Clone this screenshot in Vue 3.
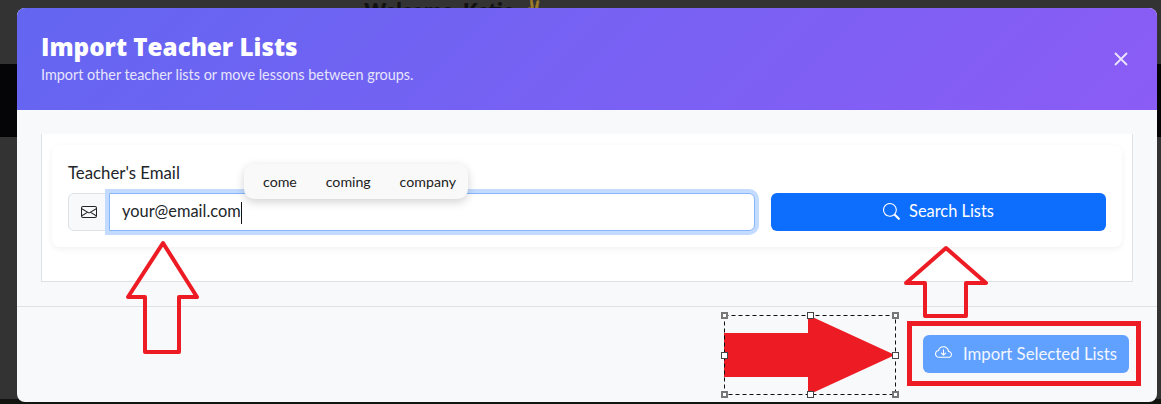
<script setup>
const suggestions = ['come', 'coming', 'company']
const handles = [
  { left: '724px', top: '315px', corner: true }, { left: '810px', top: '315px' }, { left: '895px', top: '315px', corner: true },
  { left: '724px', top: '355px' }, { left: '895px', top: '355px' },
  { left: '724px', top: '394px', corner: true }, { left: '810px', top: '394px' }, { left: '895px', top: '394px', corner: true }
]
</script>

<template>
  <div class="page">
    <div class="backdrop-top">
      <span class="welcome">Welcome, Katie <em>✌</em></span>
    </div>
    <div class="backdrop-band"></div>
    <div class="backdrop-rest"></div>

    <section class="modal">
      <header class="head">
        <div>
          <h1>Import Teacher Lists</h1>
          <p>Import other teacher lists or move lessons between groups.</p>
        </div>
        <svg class="close" viewBox="0 0 16 16" width="16" height="16" aria-label="Close">
          <path d="M2 2 14 14M14 2 2 14" stroke="#ece6fd" stroke-width="1.8" fill="none" />
        </svg>
      </header>

      <div class="body">
        <div class="panel">
          <div class="card">
            <label>Teacher's Email</label>
            <div class="row">
              <div class="group">
                <span class="addon">
                  <svg viewBox="0 0 16 16" width="16" height="16">
                    <path fill="#212529" d="M0 4a2 2 0 0 1 2-2h12a2 2 0 0 1 2 2v8a2 2 0 0 1-2 2H2a2 2 0 0 1-2-2V4Zm2-1a1 1 0 0 0-1 1v.217l7 4.2 7-4.2V4a1 1 0 0 0-1-1H2Zm13 2.383-4.708 2.825L15 11.105V5.383Zm-.034 6.876-5.64-3.471L8 9.583l-1.326-.795-5.64 3.47A1 1 0 0 0 2 13h12a1 1 0 0 0 .966-.741ZM1 11.105l4.708-2.897L1 5.383v5.722Z" />
                  </svg>
                </span>
                <div class="input">your@email.com<i class="caret"></i></div>
              </div>
              <button class="search" type="button">
                <svg viewBox="0 0 16 16" width="17" height="17">
                  <path fill="#fff" d="M11.742 10.344a6.5 6.5 0 1 0-1.397 1.398l3.85 3.85a1 1 0 0 0 1.415-1.414l-3.868-3.834ZM12 6.5a5.5 5.5 0 1 1-11 0 5.5 5.5 0 0 1 11 0Z" />
                </svg>
                <span>Search Lists</span>
              </button>
            </div>
          </div>
        </div>
      </div>

      <footer class="foot">
        <button class="import" type="button">
          <svg viewBox="0 0 16 16" width="17" height="17">
            <path fill="#fff" d="M4.406 1.342A5.53 5.53 0 0 1 8 0c2.69 0 4.923 2 5.166 4.579C14.758 4.804 16 6.137 16 7.773 16 9.569 14.502 11 12.687 11H3.781C1.708 11 0 9.366 0 7.318c0-1.763 1.266-3.223 2.942-3.593.143-.863.698-1.723 1.464-2.383Zm.653.757c-.757.653-1.153 1.44-1.153 2.056v.448l-.445.049C2.064 4.805 1 5.952 1 7.318 1 8.785 2.23 10 3.781 10h8.906C13.98 10 15 8.988 15 7.773c0-1.216-1.02-2.228-2.313-2.228h-.5v-.5C12.188 2.825 10.328 1 8 1a4.53 4.53 0 0 0-2.941 1.1Z" transform="translate(0 2)" />
            <path fill="#fff" d="M7.646 10.854a.5.5 0 0 0 .708 0l2-2a.5.5 0 0 0-.708-.708L8.5 9.293V5.5a.5.5 0 0 0-1 0v3.793L6.354 8.146a.5.5 0 1 0-.708.708l2 2Z" />
          </svg>
          <span>Import Selected Lists</span>
        </button>
      </footer>
    </section>

    <div class="popup">
      <span v-for="word in suggestions" :key="word">{{ word }}</span>
    </div>

    <svg class="marks" viewBox="0 0 1161 404" width="1161" height="404">
      <path class="outline" d="M163 243 197 297H179V352H145V297H128Z" />
      <path class="outline" d="M946 248 986 283H966V316H925V283H906Z" />
      <path fill="#ed1c24" d="M724 333H808V315L895 355 808 395V377H724Z" />
      <rect x="724.5" y="315.5" width="171" height="79" fill="none" stroke="#111" stroke-dasharray="4 3" />
      <rect x="909.5" y="323.5" width="229" height="60" fill="none" stroke="#ed1c24" stroke-width="5" />
    </svg>
    <i
      v-for="(h, n) in handles"
      :key="n"
      class="handle"
      :class="{ corner: h.corner }"
      :style="{ left: h.left, top: h.top }"
    ></i>
  </div>
</template>

<style>
html, body { margin: 0; background: #000; overflow: hidden; }
</style>

<style scoped>
.page {
  position: relative;
  width: 1161px;
  height: 404px;
  overflow: hidden;
  background: #333;
  font-family: "Lato", "Noto Sans", sans-serif;
  color: #212529;
}
.backdrop-top {
  height: 64px;
  background: #333;
  overflow: hidden;
}
.welcome {
  display: block;
  padding-left: 364px;
  margin-top: -3px;
  font-size: 21px;
  font-weight: 800;
  color: #111;
}
.welcome em { font-style: normal; opacity: 0.5; }
.backdrop-band { height: 73px; background: #050507; }
.backdrop-rest { height: 267px; background: linear-gradient(#333 98%, #12140f 98%); }
.modal {
  position: absolute;
  left: 17px;
  top: 8px;
  width: 1140px;
  height: 394px;
  border-radius: 8px;
  overflow: hidden;
  background: #f8f9fb;
  display: flex;
  flex-direction: column;
}
.head {
  height: 102px;
  box-sizing: border-box;
  padding: 24px 28px 0 24px;
  display: flex;
  justify-content: space-between;
  color: #fff;
  background: linear-gradient(135deg, #6366f1, #8b5cf6);
}
.head h1 {
  margin: 0;
  font-family: "Open Sans", "Lato", sans-serif;
  font-size: 24.2px;
  line-height: 30px;
  font-weight: 800;
}
.head p {
  margin: 3px 0 0;
  font-size: 14.4px;
  line-height: 20px;
  color: #e6e4fd;
}
.close { margin-top: 19px; }
.body { height: 197px; box-sizing: border-box; padding: 24px; border-bottom: 1px solid #dee2e6; }
.panel {
  height: 148px;
  box-sizing: border-box;
  padding: 11px 10px;
  background: #fff;
  border: 1px solid #dee2e6;
  border-top: 0;
}
.card {
  height: 102px;
  box-sizing: border-box;
  padding: 18px 16px 0;
  border-radius: 8px;
  background: #fff;
  box-shadow: 0 2px 6px rgba(0, 0, 0, 0.06);
}
label { display: block; font-size: 16.8px; line-height: 19px; margin-bottom: 11px; }
.row { display: flex; gap: 16px; }
.group { flex: 0 0 687px; display: flex; }
.addon {
  width: 40px;
  height: 38px;
  box-sizing: border-box;
  padding-left: 2px;
  display: flex;
  align-items: center;
  justify-content: center;
  background: #f8f9fa;
  border: 1px solid #dee2e6;
  border-radius: 6px 0 0 6px;
}
.input {
  flex: 1;
  height: 38px;
  margin-left: 1px;
  box-sizing: border-box;
  padding-left: 12px;
  line-height: 34px;
  font-size: 16.4px;
  background: #fff;
  border: 1px solid #86b7fe;
  border-radius: 0 6px 6px 0;
  box-shadow: 0 0 0 4px #c2dbfe;
}
.caret {
  display: inline-block;
  width: 1px;
  height: 22px;
  vertical-align: middle;
  background: #111;
}
.search {
  flex: 0 0 335px;
  height: 38px;
  border: 0;
  border-radius: 6px;
  background: #0d6efd;
  color: #fff;
  font: 16.4px "Lato", "Noto Sans", sans-serif;
  display: flex;
  align-items: center;
  justify-content: center;
  gap: 9px;
}
.search span { margin-top: -3px; }
.search svg { margin-top: -1px; }
.import span { margin-top: -1px; }
.import svg { margin-top: -4px; }
.foot {
  flex: 1;
  display: flex;
  justify-content: flex-end;
  padding: 28px 28px 0 0;
}
.import {
  width: 206px;
  height: 38px;
  border: 0;
  border-radius: 6px;
  background: #60a0ff;
  color: #f1f6ff;
  font: 16.8px "Lato", "Noto Sans", sans-serif;
  display: flex;
  align-items: center;
  justify-content: center;
  gap: 11px;
}
.popup {
  position: absolute;
  left: 244px;
  top: 164px;
  width: 224px;
  height: 35px;
  box-sizing: border-box;
  padding: 0 12px 0 19px;
  display: flex;
  align-items: center;
  justify-content: space-between;
  background: #f9f9f9;
  border-radius: 10px;
  font-size: 14.2px;
  color: #222;
  box-shadow: 0 3px 10px rgba(0, 0, 0, 0.18);
}
.marks { position: absolute; left: 0; top: 0; }
.outline { fill: none; stroke: #ed1c24; stroke-width: 4; stroke-linejoin: round; }
.handle {
  position: absolute;
  width: 5px;
  height: 5px;
  margin: -3px 0 0 -3px;
  background: #fff;
  border: 1px solid #444;
}
.handle.corner { width: 3px; height: 3px; border: 2px solid #777; }
</style>
